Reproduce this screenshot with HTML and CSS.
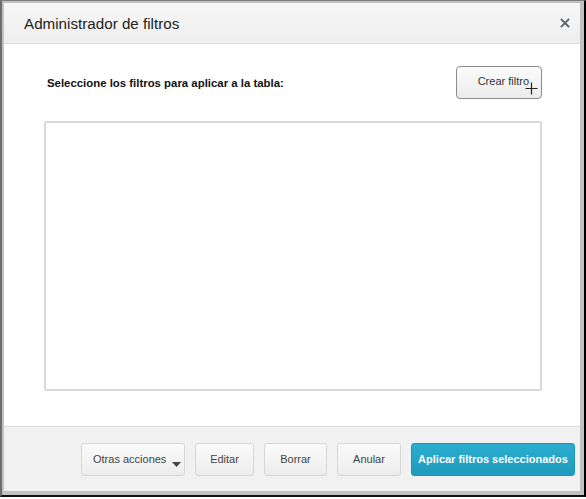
FILE: index.html
```html
<!DOCTYPE html>
<html lang="es">
<head>
<meta charset="utf-8">
<title>Administrador de filtros</title>
<link rel="stylesheet" href="styles.css">
</head>
<body>
<div class="frame">
  <div class="dialog">
    <header class="dialog-header">
      <h1 class="dialog-title">Administrador de filtros</h1>
      <button class="close" aria-label="Cerrar">
        <svg width="10" height="10" viewBox="0 0 10 10"><path d="M1.5 1.5L8.5 8.5M8.5 1.5L1.5 8.5" stroke="#5f646b" stroke-width="1.8" stroke-linecap="square"/></svg>
      </button>
    </header>
    <main class="dialog-body">
      <div class="toolbar">
        <span class="prompt">Seleccione los filtros para aplicar a la tabla:</span>
        <button class="btn btn-create">Crear filtro
          <svg class="plus" width="13" height="13" viewBox="0 0 13 13"><path d="M6.5 0.5V12.5M0.5 6.5H12.5" stroke="#222" stroke-width="1.2"/></svg>
        </button>
      </div>
      <div class="filter-list"></div>
    </main>
    <footer class="dialog-footer">
      <button class="btn btn-menu">Otras acciones
        <svg class="caret" width="9" height="5" viewBox="0 0 9 5"><path d="M0 0H9L4.5 5Z" fill="#444"/></svg>
      </button>
      <button class="btn btn-edit">Editar</button>
      <button class="btn btn-delete">Borrar</button>
      <button class="btn btn-cancel">Anular</button>
      <button class="btn btn-primary">Aplicar filtros seleccionados</button>
    </footer>
  </div>
</div>
</body>
</html>
```
FILE: styles.css
```css
html, body {
  margin: 0;
  padding: 0;
  background: #fff;
}

.frame {
  box-sizing: border-box;
  width: 586px;
  height: 497px;
  border-top: 1px solid #7d7d7d;
  border-left: 2px solid #6d6d6d;
  border-right: 2px solid #000;
  border-bottom: 2px solid #111;
  background: #c2c2c2;
  padding: 2px 4px 4px 2px;
}

.dialog {
  height: 100%;
  display: flex;
  flex-direction: column;
  background: #fff;
  font-family: "Liberation Sans", Arial, sans-serif;
}

.dialog-header {
  height: 40px;
  flex: none;
  display: flex;
  align-items: center;
  justify-content: space-between;
  padding: 0 9px 0 20px;
  background: linear-gradient(#f7f7f7, #eeeeee);
  border-bottom: 1px solid #dcdcdc;
}

.dialog-title {
  margin: 0;
  font-size: 15.2px;
  font-weight: normal;
  color: #222;
}

.close {
  border: 0;
  background: none;
  padding: 0;
  width: 12px;
  height: 12px;
  display: flex;
  align-items: center;
  justify-content: center;
}

.dialog-body {
  flex: 1;
  padding: 22px 38px 35px 40px;
  display: flex;
  flex-direction: column;
}

.toolbar {
  display: flex;
  align-items: center;
  justify-content: space-between;
  padding-left: 3px;
}

.prompt {
  font-size: 11.4px;
  font-weight: bold;
  color: #111;
}

.btn {
  box-sizing: border-box;
  font-family: "Liberation Sans", Arial, sans-serif;
  font-size: 11px;
  color: #444;
  border: 1px solid #d6d6d6;
  border-radius: 3px;
  background: linear-gradient(#fbfbfb, #ececec);
  height: 33px;
  padding: 0 14px;
  position: relative;
}

.btn-create {
  width: 86px;
  height: 33px;
  border: 1px solid #8c8c8c;
  border-radius: 4px;
  color: #333;
  padding: 0 12px 4px 0;
  text-align: right;
}

.plus {
  position: absolute;
  right: 3px;
  bottom: 3px;
}

.filter-list {
  margin-top: 22px;
  flex: 1;
  border: 2px solid #d9d9d9;
  border-radius: 2px;
}

.dialog-footer {
  flex: none;
  height: 65px;
  box-sizing: border-box;
  border-top: 1px solid #dedede;
  background: #f1f1f1;
  display: flex;
  align-items: center;
  justify-content: flex-end;
  gap: 10px;
  padding: 0 5px 0 0;
}

.btn-menu {
  width: 104px;
  padding: 0 0 0 11px;
  text-align: left;
}

.caret {
  position: absolute;
  right: 3px;
  bottom: 8px;
}

.btn-edit { width: 59px; padding: 0; }
.btn-delete { width: 63px; padding: 0; }
.btn-cancel { width: 64px; padding: 0; }

.btn-primary {
  width: 164px;
  padding: 0;
  border: 1px solid #1f95b6;
  background: linear-gradient(#2aaed0, #1e9bbd);
  color: #fff;
  font-weight: bold;
  font-size: 11px;
}
```
